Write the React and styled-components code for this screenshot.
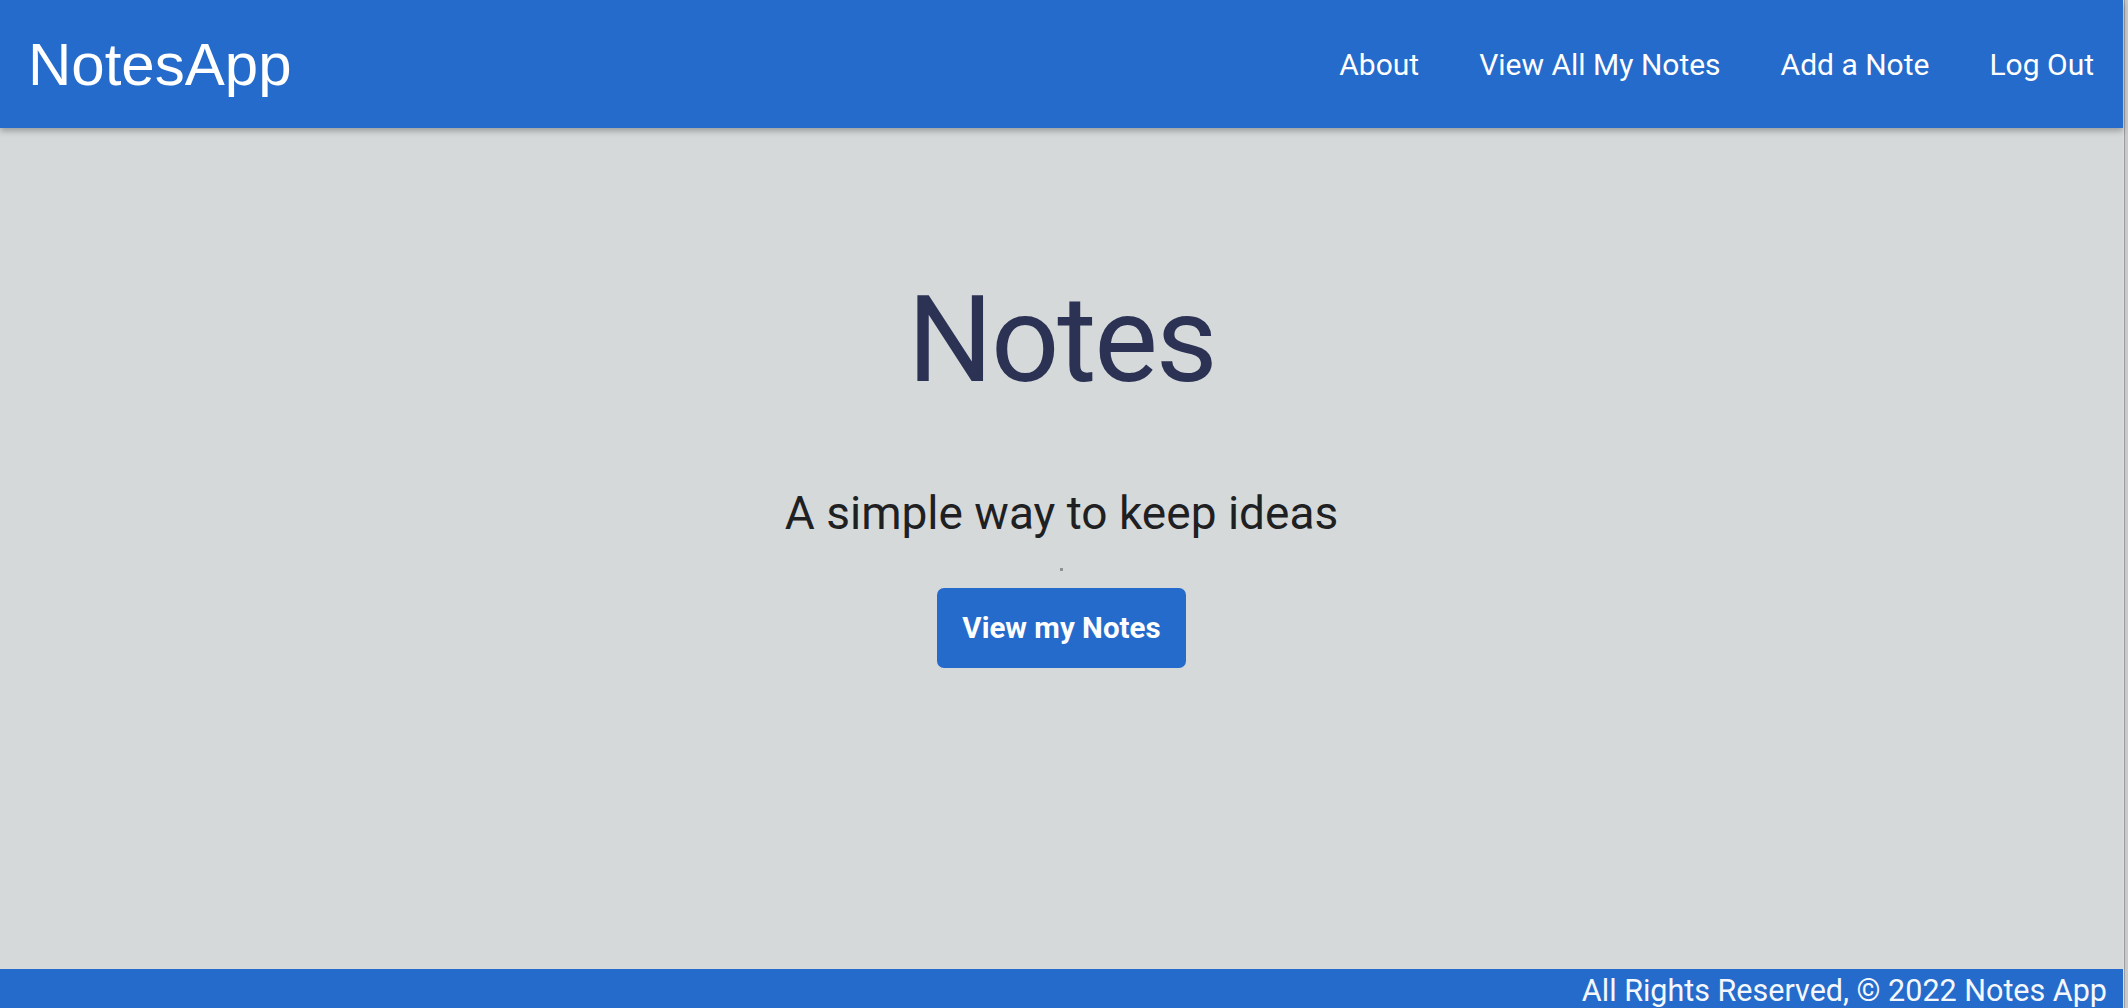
import styled, { createGlobalStyle } from 'styled-components';

const GlobalStyle = createGlobalStyle`
  html, body {
    margin: 0;
    padding: 0;
    height: 100%;
  }
  body {
    font-family: Roboto, "Liberation Sans", Arial, sans-serif;
    background-color: #d5d9da;
    overflow: hidden;
  }
  #root {
    height: 100%;
  }
`;

// Outer frame: page plus the thin window edge on the right
const Shell = styled.div`
  display: flex;
  height: 100vh;
`;

const Page = styled.div`
  flex: 1;
  display: flex;
  flex-direction: column;
  background-color: #d5d9da;
  min-width: 0;
`;

const WindowEdge = styled.div`
  width: 5px;
  background: linear-gradient(90deg, #dcdedf 0, #dcdedf 1px, #9c9c9c 1px, #9c9c9c 2px, #c9cacb 2px);
`;

// Navbar
const Navbar = styled.header`
  position: relative;
  z-index: 2;
  height: 128px;
  display: flex;
  align-items: center;
  justify-content: space-between;
  padding: 0 29px 0 28px;
  background-color: #256bcb;
  box-shadow: 0 3px 6px rgba(0, 0, 0, 0.28);
`;

const Brand = styled.a`
  font-family: "Liberation Sans", Arial, sans-serif;
  font-size: 60px;
  color: #ffffff;
  text-decoration: none;
  line-height: 1;
  margin-top: 2px;
`;

const NavLinks = styled.nav`
  display: flex;
  align-items: center;
  gap: 60px;
`;

const NavLink = styled.a`
  font-size: 30px;
  color: #ffffff;
  text-decoration: none;
  cursor: pointer;
`;

// Hero
const Hero = styled.main`
  flex: 1;
  display: flex;
  flex-direction: column;
  align-items: center;
  padding-top: 140px;
  text-align: center;
`;

const Title = styled.h1`
  margin: 0;
  font-size: 120px;
  font-weight: 400;
  line-height: 144px;
  letter-spacing: -2.2px;
  color: #2b3254;
`;

const Tagline = styled.p`
  margin: 74px 0 0;
  font-size: 46px;
  line-height: 54px;
  color: #1f2022;
`;

const Speck = styled.span`
  display: block;
  width: 3px;
  height: 3px;
  margin: 28px 0 17px;
  background-color: #8d9192;
`;

const PrimaryButton = styled.button`
  height: 80px;
  padding: 0 25px;
  border: none;
  border-radius: 7px;
  background-color: #256bcb;
  color: #ffffff;
  font-family: Roboto, "Liberation Sans", Arial, sans-serif;
  font-size: 29.5px;
  font-weight: 700;
  cursor: pointer;
`;

// Footer
const Footer = styled.footer`
  height: 39px;
  padding: 2px 16px 0 0;
  box-sizing: border-box;
  background-color: #256bcb;
  color: #f4f7fc;
  font-size: 30.5px;
  line-height: 39px;
  text-align: right;
  overflow: hidden;
`;

const App = () => {
  return (
    <>
      <GlobalStyle />
      <Shell>
        <Page>
          <Navbar>
            <Brand>NotesApp</Brand>
            <NavLinks>
              <NavLink>About</NavLink>
              <NavLink>View All My Notes</NavLink>
              <NavLink>Add a Note</NavLink>
              <NavLink>Log Out</NavLink>
            </NavLinks>
          </Navbar>

          <Hero>
            <Title>Notes</Title>
            <Tagline>A simple way to keep ideas</Tagline>
            <Speck />
            <PrimaryButton>View my Notes</PrimaryButton>
          </Hero>

          <Footer>All Rights Reserved, © 2022 Notes App</Footer>
        </Page>
        <WindowEdge />
      </Shell>
    </>
  );
};

export default App;
